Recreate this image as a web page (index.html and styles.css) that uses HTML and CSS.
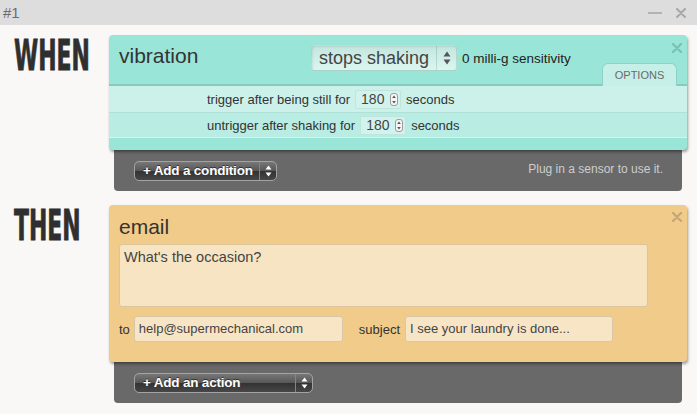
FILE: index.html
```html
<!DOCTYPE html>
<html>
<head>
<meta charset="utf-8">
<link rel="stylesheet" href="styles.css">
</head>
<body>
<div class="titlebar">
  <span class="rule-num">#1</span>
  <div class="winctrls">
    <span class="win-min"></span>
    <svg class="win-close" width="10" height="10" viewBox="0 0 10 10"><path d="M1 1L9 9M9 1L1 9" stroke="#a9a9a9" stroke-width="2.2" stroke-linecap="round"/></svg>
  </div>
</div>

<section class="clause when">
  <div class="clause-label"><span>WHEN</span></div>
  <div class="stack">
    <div class="card cond">
      <div class="cond-head">
        <div class="cond-title">vibration</div>
        <div class="select">
          <span class="select-text">stops shaking</span>
          <span class="select-arr">
            <svg width="8" height="14" viewBox="0 0 8 14"><path d="M4 0.5L7.5 5.5H0.5Z M4 13.5L7.5 8.5H0.5Z" fill="#555"/></svg>
          </span>
        </div>
        <div class="sens">0 milli-g sensitivity</div>
        <div class="tab">OPTIONS</div>
        <svg class="card-close" width="10" height="10" viewBox="0 0 10 10"><path d="M1 1L9 9M9 1L1 9" stroke="#79c2b4" stroke-width="2.4" stroke-linecap="round"/></svg>
      </div>
      <div class="crow r1">
        <span>trigger after being still for</span>
        <span class="numbox">180<span class="spin"><svg width="4" height="9" viewBox="0 0 4 9"><path d="M2 0.5L3.8 3H0.2Z M2 8.5L3.8 6H0.2Z" fill="#555"/></svg></span></span>
        <span>seconds</span>
      </div>
      <div class="crow r2">
        <span>untrigger after shaking for</span>
        <span class="numbox">180<span class="spin"><svg width="4" height="9" viewBox="0 0 4 9"><path d="M2 0.5L3.8 3H0.2Z M2 8.5L3.8 6H0.2Z" fill="#555"/></svg></span></span>
        <span>seconds</span>
      </div>
      <div class="cond-foot"></div>
    </div>
    <div class="tray">
      <div class="popup popup-cond">
        <span class="popup-lbl">+ Add a condition</span>
        <span class="popup-arr"><svg width="7" height="12" viewBox="0 0 7 12"><path d="M3.5 0.5L6.5 4.5H0.5Z M3.5 11.5L6.5 7.5H0.5Z" fill="#fff"/></svg></span>
      </div>
      <span class="hint">Plug in a sensor to use it.</span>
    </div>
  </div>
</section>

<section class="clause then">
  <div class="clause-label"><span>THEN</span></div>
  <div class="stack">
    <div class="card email">
      <svg class="card-close email-close" width="10" height="10" viewBox="0 0 10 10"><path d="M1 1L9 9M9 1L1 9" stroke="#c4a775" stroke-width="2.4" stroke-linecap="round"/></svg>
      <div class="email-title">email</div>
      <div class="msg">What's the occasion?</div>
      <div class="fields">
        <span class="flabel">to</span>
        <span class="field field-to">help@supermechanical.com</span>
        <span class="flabel flabel-subj">subject</span>
        <span class="field field-subj">I see your laundry is done...</span>
      </div>
    </div>
    <div class="tray">
      <div class="popup popup-act">
        <span class="popup-lbl">+ Add an action</span>
        <span class="popup-arr"><svg width="7" height="12" viewBox="0 0 7 12"><path d="M3.5 0.5L6.5 4.5H0.5Z M3.5 11.5L6.5 7.5H0.5Z" fill="#fff"/></svg></span>
      </div>
    </div>
  </div>
</section>
</body>
</html>
```

FILE: styles.css
```css
* { box-sizing: border-box; }
html, body { margin: 0; padding: 0; }
body {
  width: 697px;
  height: 414px;
  overflow: hidden;
  background: #f9f8f7;
  font-family: "Liberation Sans", Arial, sans-serif;
  color: #333;
}

.titlebar {
  height: 25px;
  background: #dddddd;
  display: flex;
  align-items: center;
  padding: 0 11px 0 3px;
}
.rule-num { font-size: 15px; color: #6b6b6b; }
.winctrls { margin-left: auto; display: flex; align-items: center; gap: 14px; }
.win-min { width: 14px; height: 2px; background: #b3b3b3; }
.win-close { display: block; }

.clause { display: grid; grid-template-columns: 109px 578px; }
.when { margin-top: 10px; }
.then { margin-top: 14px; }

.clause-label {
  padding-left: 14px;
  font-family: "Liberation Sans Narrow", "DejaVu Sans Condensed", sans-serif;
  font-weight: 700;
  font-size: 42px;
  line-height: 42px;
  color: #2f2f2f;
}
.clause-label span {
  display: inline-block;
  transform: scaleX(0.58);
  transform-origin: left center;
  -webkit-text-stroke: 0.8px #2f2f2f;
}

.stack { display: flex; flex-direction: column; }
.card {
  position: relative;
  z-index: 1;
  border-radius: 4px;
  box-shadow: 1px 2px 3px rgba(0, 0, 0, 0.38);
}

.cond { background: #99e5d7; }
.cond-head {
  position: relative;
  height: 51px;
  display: flex;
  align-items: flex-start;
  padding-left: 10px;
  border-bottom: 2px solid #86cbbe;
}
.cond-title {
  width: 192px;
  margin-top: 8px;
  font-size: 21px;
  line-height: 26px;
  color: #333;
}
.select {
  margin-top: 10px;
  width: 146px;
  height: 26px;
  display: flex;
  border: 1px solid rgba(60, 110, 100, 0.18);
  border-radius: 4px;
  background: linear-gradient(#c3e6de, #dbf6f0);
  box-shadow: inset 1px 1px 2px rgba(0, 0, 0, 0.08);
}
.select-text {
  flex: 1;
  padding-left: 7px;
  font-size: 18px;
  line-height: 24px;
  color: #444;
}
.select-arr {
  width: 20px;
  border-left: 1px solid rgba(60, 110, 100, 0.2);
  display: flex;
  align-items: center;
  justify-content: center;
}
.select-arr svg { display: block; }
.sens {
  margin-left: 5px;
  margin-top: 16px;
  font-size: 13.5px;
  line-height: 16px;
  color: #222;
}
.tab {
  position: relative;
  z-index: 2;
  margin-left: auto;
  margin-right: 10px;
  align-self: flex-end;
  margin-bottom: -2px;
  width: 75px;
  height: 23px;
  background: #c6efe7;
  border: 1px solid #8fd2c5;
  border-bottom: none;
  border-radius: 6px 6px 0 0;
  text-align: center;
  font-size: 11px;
  line-height: 22px;
  color: #6a6a6a;
}
.card-close { position: absolute; top: 8px; right: 5px; display: block; }

.crow {
  display: flex;
  align-items: center;
  padding-left: 98px;
  font-size: 13px;
  color: #333;
}
.crow.r1 { height: 27px; background: #ccf1ea; border-bottom: 1px solid #b0e1d7; }
.crow.r2 { height: 25px; background: #b9ece2; border-bottom: 1px solid #d0f4ed; }
.cond-foot { height: 12px; }

.numbox {
  display: flex;
  align-items: center;
  width: 46px;
  height: 19px;
  margin: 0 5px;
  padding-left: 5px;
  background: #d2f3ed;
  border: 1px solid #bfe5dd;
  border-radius: 2px;
  font-size: 14px;
  color: #444;
}
.spin {
  margin-left: auto;
  margin-right: 2px;
  width: 8px;
  height: 13px;
  border: 1px solid #9c9c9c;
  border-radius: 3px;
  background: #f5f5f5;
  display: flex;
  align-items: center;
  justify-content: center;
}
.spin svg { display: block; }

.tray {
  margin: 0 5px;
  height: 41px;
  background: #696969;
  border-radius: 0 0 4px 4px;
  display: flex;
  align-items: flex-start;
  padding: 11px 19px 0 20px;
}
.popup {
  display: flex;
  height: 20px;
  border: 1px solid #a3a3a3;
  border-radius: 5px;
  background: linear-gradient(#777 0%, #585858 48%, #333 52%, #474747 100%);
  color: #fff;
  font-weight: 700;
  font-size: 13.5px;
  letter-spacing: -0.2px;
}
.popup-cond { width: 143px; }
.popup-act { width: 179px; }
.popup-lbl {
  flex: 1;
  padding-left: 8px;
  line-height: 18px;
  text-shadow: 0 -1px 0 rgba(0, 0, 0, 0.5);
}
.popup-arr {
  width: 17px;
  border-left: 1px solid #858585;
  display: flex;
  align-items: center;
  justify-content: center;
}
.popup-arr svg { display: block; }
.hint {
  margin-left: auto;
  margin-top: 1px;
  font-size: 12px;
  line-height: 14px;
  color: #cdcdcd;
}

.email {
  background: #f1cb89;
  padding: 9px 39px 20px 10px;
}
.email-close { top: 7px; }
.email-title { font-size: 21px; line-height: 26px; color: #333; }
.msg {
  margin-top: 4px;
  height: 63px;
  padding: 4px;
  background: #f7e4c3;
  border: 1px solid #dcc59d;
  border-radius: 3px;
  font-size: 14.5px;
  line-height: 17px;
  color: #444;
}
.fields { margin-top: 9px; display: flex; align-items: center; }
.flabel { font-size: 13px; color: #333; margin-right: 4px; }
.flabel-subj { margin-left: 16px; margin-right: 5px; }
.field {
  height: 26px;
  padding-left: 4px;
  background: #f8e5c5;
  border: 1px solid #d8c7a8;
  border-radius: 3px;
  font-size: 13px;
  line-height: 24px;
  color: #444;
}
.field-to { width: 209px; }
.field-subj { width: 208px; }
```
